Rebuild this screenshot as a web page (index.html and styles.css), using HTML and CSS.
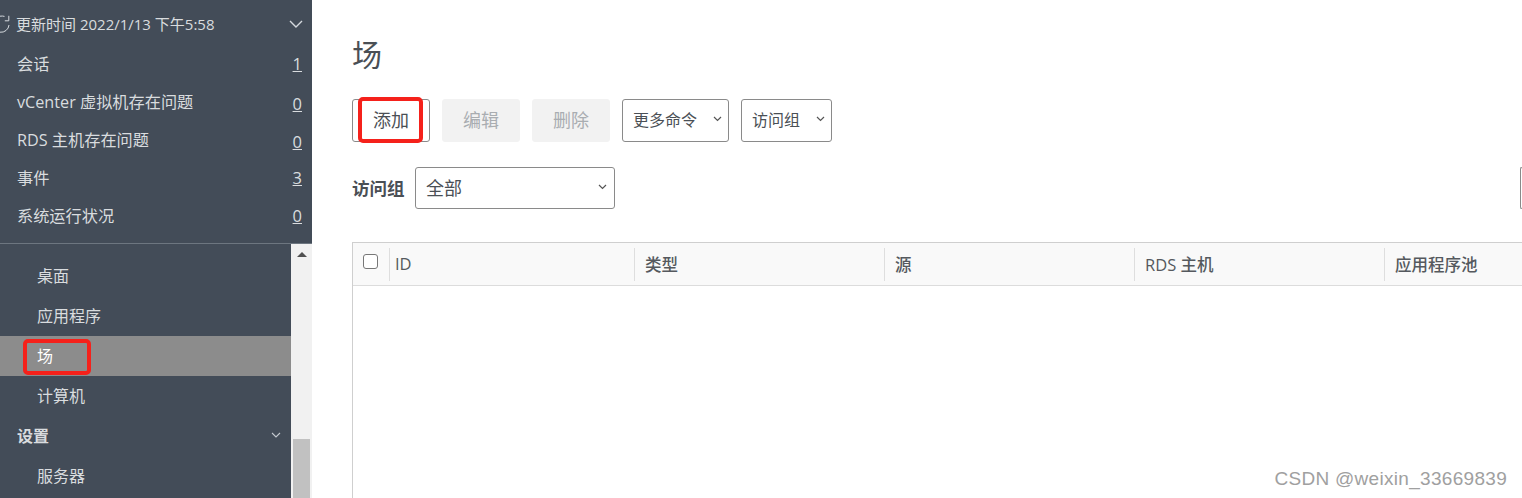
FILE: index.html
```html
<!DOCTYPE html>
<html lang="zh-CN">
<head>
<meta charset="utf-8">
<title>场</title>
<link rel="stylesheet" href="styles.css">
</head>
<body>
<div class="page">
  <aside class="sidebar">
    <section class="summary">
      <div class="update">
        <svg class="refresh" width="10" height="18" viewBox="0 0 10 18"><path d="M0 1.2Q2.500 .8 4.500 1.400M9 10A8 8 0 0 1 0 17.200M8.800 .8v5H4.800" fill="none" stroke="#d5d9de" stroke-width="1"/></svg>
        <span class="update-text">更新时间 2022/1/13 下午5:58</span>
        <svg class="chev-lg" width="14" height="8" viewBox="0 0 14 8"><path d="M1 1l6 6 6-6" fill="none" stroke="#d5d9de" stroke-width="1.4"/></svg>
      </div>
      <div class="stat"><span>会话</span><a>1</a></div>
      <div class="stat low"><span>vCenter 虚拟机存在问题</span><a>0</a></div>
      <div class="stat low"><span>RDS 主机存在问题</span><a>0</a></div>
      <div class="stat"><span>事件</span><a>3</a></div>
      <div class="stat"><span>系统运行状况</span><a>0</a></div>
    </section>
    <div class="nav-wrap">
      <nav class="nav">
        <div class="nav-item">桌面</div>
        <div class="nav-item">应用程序</div>
        <div class="nav-item active">场<i class="mark mark-nav"></i></div>
        <div class="nav-item">计算机</div>
        <div class="nav-group"><span>设置</span><svg width="10" height="6" viewBox="0 0 10 6"><path d="M1 1l4 4 4-4" fill="none" stroke="#c4c9cf" stroke-width="1.1"/></svg></div>
        <div class="nav-item">服务器</div>
      </nav>
      <div class="scrollbar">
        <span class="arrow"></span>
        <span class="thumb"></span>
      </div>
    </div>
  </aside>
  <main class="main">
    <h1 class="title">场</h1>
    <div class="toolbar">
      <button class="btn">添加<i class="mark mark-add"></i></button>
      <button class="btn disabled">编辑</button>
      <button class="btn disabled">删除</button>
      <button class="btn drop more"><span>更多命令</span><svg class="chev" width="9" height="6" viewBox="0 0 9 6"><path d="M1 1l3.500 3.500L8 1" fill="none" stroke="#555" stroke-width="1.2"/></svg></button>
      <button class="btn drop group"><span>访问组</span><svg class="chev" width="9" height="6" viewBox="0 0 9 6"><path d="M1 1l3.500 3.500L8 1" fill="none" stroke="#555" stroke-width="1.2"/></svg></button>
    </div>
    <div class="filter">
      <label class="filter-label">访问组</label>
      <div class="select"><span>全部</span><svg class="chev" width="9" height="6" viewBox="0 0 9 6"><path d="M1 1l3.500 3.500L8 1" fill="none" stroke="#555" stroke-width="1.2"/></svg></div>
      <div class="search"></div>
    </div>
    <div class="table">
      <div class="thead">
        <div class="th th-check"><span class="checkbox"></span></div>
        <div class="th th-id">ID</div>
        <div class="th th-col">类型</div>
        <div class="th th-col">源</div>
        <div class="th th-col">RDS 主机</div>
        <div class="th th-col">应用程序池</div>
      </div>
    </div>
  </main>
</div>
<div class="watermark">CSDN @weixin_33669839</div>
</body>
</html>
```
FILE: styles.css
```css
* { box-sizing: border-box; }
html, body { margin: 0; height: 498px; overflow: hidden; background: #fff; }
body { font-family: "Open Sans", "Noto Sans CJK SC", sans-serif; color: #4a4f55; position: relative; }
.page { display: flex; height: 498px; overflow: hidden; }

.sidebar { width: 312px; flex: none; background: #434c58; color: #d9dcdf; display: flex; flex-direction: column; }
.summary { height: 244px; flex: none; padding-top: 5px; border-bottom: 1px solid #6d7680; }
.update { height: 38px; display: flex; align-items: center; font-size: 15px; padding-right: 9px; }
.refresh { flex: none; margin-right: 6px; }
.update-text { flex: 1; white-space: nowrap; padding-bottom: 1px; }
.stat { height: 38px; display: flex; justify-content: space-between; align-items: center; padding: 2px 10px 0 17px; font-size: 16.2px; white-space: nowrap; }
.stat a { text-decoration: underline; color: #d9dcdf; font-size: 16.5px; }
.stat.low a { padding-top: 4px; }

.nav-wrap { flex: 1; display: flex; min-height: 0; }
.nav { flex: 1; padding-top: 12px; font-size: 16px; }
.nav-item { height: 40px; display: flex; align-items: center; padding: 0 0 2px 37px; position: relative; }
.nav-item.active { background: #8c8c8c; color: #fff; }
.nav-group { height: 40px; display: flex; align-items: center; justify-content: space-between; padding: 0 10px 2px 17px; font-weight: 700; }
.scrollbar { width: 21px; flex: none; background: #f1f1f1; display: flex; flex-direction: column; align-items: center; padding-top: 8px; overflow: hidden; }
.arrow { width: 0; height: 0; flex: none; border-left: 5px solid transparent; border-right: 5px solid transparent; border-bottom: 5px solid #505050; }
.thumb { width: 17px; flex: 1; margin-top: 182px; background: #c1c1c1; }

.main { flex: 1; min-width: 0; padding-left: 40px; overflow: hidden; }
.title { margin: 0; height: 99px; padding-top: 35px; font-size: 30px; line-height: 40px; font-weight: 400; color: #4a4f55; }
.toolbar { display: flex; gap: 12px; height: 43px; }
.btn { width: 78px; height: 43px; flex: none; padding: 0 0 3px; border: 1px solid #8a8a8a; border-radius: 3px; background: #fff; font: inherit; font-size: 18px; color: #4a4f55; position: relative; }
.btn.disabled { background: #f2f2f2; border-color: #f2f2f2; color: #a9adb1; }
.btn.drop { display: flex; align-items: center; justify-content: space-between; padding: 0 6px 3px 10px; font-size: 16px; }
.more { width: 107px; }
.group { width: 91px; }

.filter { display: flex; align-items: center; height: 42px; margin-top: 25px; }
.filter-label { width: 63px; flex: none; font-size: 17.5px; font-weight: 700; padding-bottom: 2px; }
.select { width: 200px; height: 42px; flex: none; display: flex; align-items: center; justify-content: space-between; padding: 0 7px 2px 10px; border: 1px solid #8a8a8a; border-radius: 3px; font-size: 18px; }
.search { width: 2px; height: 42px; flex: none; margin-left: auto; border: 1px solid #8a8a8a; border-right: 0; border-radius: 3px 0 0 3px; }

.table { margin-top: 33px; height: 256px; border-top: 1px solid #cfcfcf; border-left: 1px solid #cfcfcf; }
.thead { height: 43px; display: flex; background: #f9f9f9; border-bottom: 1px solid #dcdcdc; padding: 5px 0; font-size: 16.5px; font-weight: 500; color: #55595e; }
.th { display: flex; align-items: center; flex: none; white-space: nowrap; border-left: 1px solid #dedede; height: 33px; padding-left: 10px; padding-bottom: 2px; }
.th-check { width: 36px; border-left: 0; padding: 0 0 6px 10px; }
.th-id { width: 245px; padding-left: 5px; }
.th-col { width: 250px; }
.th-col:last-child { width: auto; flex: 1; min-width: 0; }
.checkbox { width: 15px; height: 15px; border: 1.5px solid #777; border-radius: 3px; background: #fff; }

.mark { position: absolute; border: 4px solid #f5211b; border-radius: 5px; pointer-events: none; }
.mark-nav { left: 23px; top: 3px; width: 68px; height: 36px; }
.mark-add { left: 5px; top: -3px; width: 65px; height: 46px; }

.watermark { position: absolute; right: 15px; bottom: 8px; font-family: "Liberation Sans", sans-serif; font-size: 19px; letter-spacing: 0.3px; color: #a0a0a0; }
```
